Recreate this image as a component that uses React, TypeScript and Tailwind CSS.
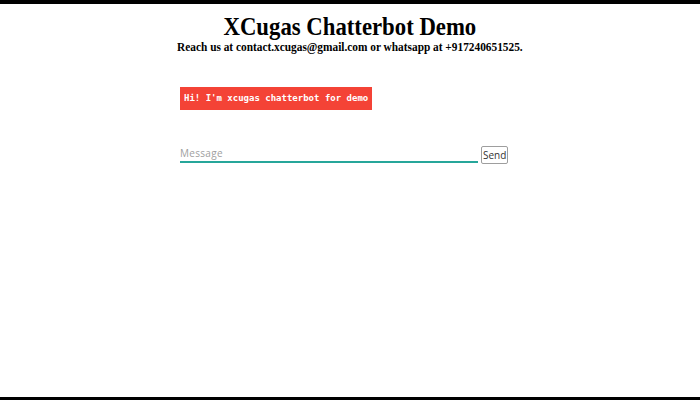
export default function App() {
  return (
    <div className="h-[400px] w-[700px] bg-white border-t-4 border-b-[3px] border-black flex flex-col items-center overflow-hidden">
      <h1 className="mt-[9px] text-[25px] leading-[28px] font-bold text-black scale-x-[0.91] [font-family:'Liberation_Serif',serif]">
        XCugas Chatterbot Demo
      </h1>
      <p className="-mt-[1px] text-[12px] leading-[14px] font-bold text-black scale-x-[0.945] [font-family:'Liberation_Serif',serif]">
        Reach us at contact.xcugas@gmail.com or whatsapp at +917240651525.
      </p>

      <div className="w-[340px] mt-[33px]">
        <div className="flex">
          <div className="bg-[#f44336] text-white font-bold text-[9px] leading-[23px] h-[23px] px-[4px] [font-family:'DejaVu_Sans_Mono',monospace]">
            Hi! I'm xcugas chatterbot for demo
          </div>
        </div>

        <div className="mt-[36px] flex items-end gap-[3px]">
          <input
            type="text"
            placeholder="Message"
            className="w-[298px] h-[17px] border-b-2 border-[#26a69a] outline-none text-[10px] tracking-[0.3px] placeholder:text-[#a0a0a0] [font-family:'Open_Sans',sans-serif] pb-[1px]"
          />
          <button className="h-[18px] mb-[-1px] px-[1px] border border-[#9e9e9e] rounded-[2px] bg-white text-[10px] text-[#333] [font-family:'Open_Sans',sans-serif] leading-none">
            Send
          </button>
        </div>
      </div>
    </div>
  );
}
